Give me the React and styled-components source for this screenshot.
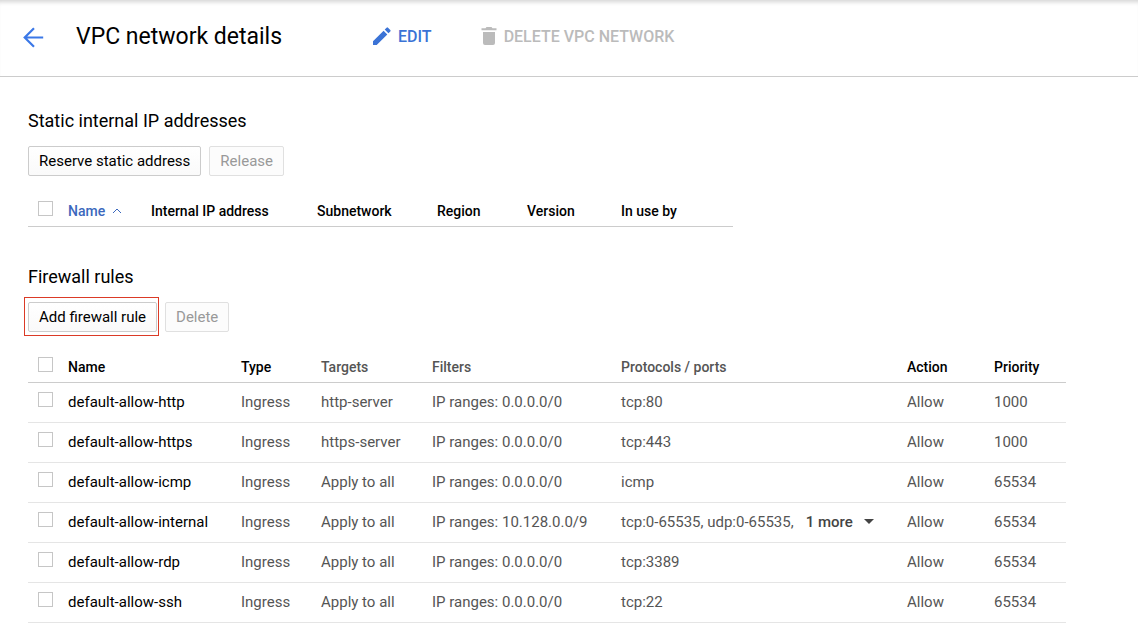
import React from "react";
import styled, { createGlobalStyle } from "styled-components";

const GlobalStyle = createGlobalStyle`
  *, *::before, *::after { box-sizing: border-box; }
  body {
    margin: 0;
    background: #fff;
    color: #000;
    font-family: Roboto, "Liberation Sans", sans-serif;
    font-size: 15px;
    line-height: 20px;
  }
`;

const Header = styled.header`
  display: flex;
  align-items: center;
  height: 77px;
  padding: 0 20px 2px;
  border-bottom: 1px solid #ccc;
  box-shadow: inset 0 5px 4px -3px #d4d4d4;
`;

const BackLink = styled.a`
  display: flex;
  margin-right: 29px;
  color: #3b78e7;
`;

const Title = styled.h1`
  margin: 0 90px 0 0;
  font-size: 23px;
  line-height: 32px;
  font-weight: 400;
  white-space: nowrap;
`;

const ToolbarButton = styled.button`
  display: flex;
  align-items: center;
  gap: 6px;
  margin: 0 48px 0 0;
  padding: 0;
  border: 0;
  background: none;
  color: #3b73d6;
  font: 500 16px/24px Roboto, "Liberation Sans", sans-serif;
  white-space: nowrap;

  &:disabled { color: #bbb; }
`;

const Content = styled.main`
  padding: 32px 72px 12px 28px;
`;

const Section = styled.section`
  & + & { margin-top: 38px; }
`;

const SectionTitle = styled.h2`
  margin: 0 0 13px;
  font-size: 18px;
  line-height: 24px;
  font-weight: 400;
`;

const ButtonRow = styled.div`
  display: flex;
  gap: 8px;
  margin-bottom: 20px;
`;

const Button = styled.button`
  height: 30px;
  padding: 0 10px;
  border: 1px solid #ccc;
  border-radius: 2px;
  background: linear-gradient(#fff, #fafafa);
  color: #000;
  font: 400 15px/20px Roboto, "Liberation Sans", sans-serif;
  white-space: nowrap;

  &:disabled {
    border-color: #e0e0e0;
    background: #fcfcfc;
    color: #999;
  }
`;

const Highlight = styled.div`
  position: relative;
  display: flex;

  &::after {
    content: "";
    position: absolute;
    inset: -5px -2px -4px -4px;
    border: 1px solid #db3a26;
    pointer-events: none;
  }
`;

const Table = styled.table`
  width: ${(p) => (p.$fill ? "100%" : "auto")};
  table-layout: ${(p) => (p.$fill ? "fixed" : "auto")};
  border-collapse: separate;
  border-spacing: 0;
`;

const Col = styled.col`
  width: ${(p) => (p.$w ? `${p.$w}px` : "auto")};
`;

const Checkbox = styled.input.attrs({ type: "checkbox" })`
  display: block;
  appearance: none;
  width: 15px;
  height: 15px;
  margin: 0 0 4px 10px;
  border: 1px solid #c6c6c6;
  background: #fff;
`;

const HeadCell = styled.th`
  height: 31px;
  padding: 0;
  border-bottom: 1px solid #ccc;
  color: ${(p) => (p.$muted ? "#555" : "#000")};
  font-size: 14px;
  font-weight: 500;
  text-align: left;
  white-space: nowrap;

  ${Checkbox} { margin-bottom: 6px; }
`;

const Cell = styled.td`
  height: 40px;
  padding: 0 0 2px;
  border-bottom: 1px solid #e5e5e5;
  color: ${(p) => (p.$strong ? "#000" : "#555")};
  white-space: nowrap;
`;

const SortButton = styled.button`
  display: flex;
  align-items: center;
  gap: 7px;
  padding: 0;
  border: 0;
  background: none;
  color: #3b68bd;
  font: 500 14px/20px Roboto, "Liberation Sans", sans-serif;
`;

const Ports = styled.div`
  display: flex;
  align-items: center;
  gap: 12px;
`;

const MoreButton = styled.button`
  display: flex;
  align-items: center;
  gap: 11px;
  padding: 0;
  border: 0;
  background: none;
  color: #444;
  font: 500 15px/20px Roboto, "Liberation Sans", sans-serif;
`;

const BackIcon = () => (
  <svg width="27" height="27" viewBox="0 0 27 27" fill="none" stroke="currentColor" strokeWidth="2.2" aria-hidden="true">
    <path d="M23.2 13.5H5M14 4.2L4.7 13.5L14 22.8" />
  </svg>
);

const EditIcon = () => (
  <svg width="20" height="20" viewBox="0 0 20 20" fill="currentColor" aria-hidden="true">
    <path d="M1 14.3V18h3.700L15.300 7.400l-3.700-3.700zM18.300 4.400a1 1 0 0 0 0-1.400L16 .7a1 1 0 0 0-1.400 0l-1.900 1.900 3.700 3.700z" />
  </svg>
);

const TrashIcon = () => (
  <svg width="18" height="20" viewBox="0 0 18 20" fill="currentColor" aria-hidden="true">
    <path d="M3 16a2 2 0 0 0 2 2h8a2 2 0 0 0 2-2V5H3zM16.500 1.200h-4L11.500 0h-5l-1 1.200h-4v2h15z" />
  </svg>
);

const SortIcon = () => (
  <svg width="10" height="6" viewBox="0 0 10 6" fill="none" stroke="currentColor" aria-hidden="true">
    <path d="M1 5L5 1L9 5" />
  </svg>
);

const CaretIcon = () => (
  <svg width="10" height="5" viewBox="0 0 10 5" fill="currentColor" aria-hidden="true">
    <path d="M0 0H10L5 5Z" />
  </svg>
);

const addressHeads = ["Internal IP address", "Subnetwork", "Region", "Version", "In use by"];

const ruleHeads = [
  { label: "Name" },
  { label: "Type" },
  { label: "Targets", muted: true },
  { label: "Filters", muted: true },
  { label: "Protocols / ports", muted: true },
  { label: "Action" },
  { label: "Priority" },
];

const rules = [
  { name: "default-allow-http", target: "http-server", range: "0.0.0.0/0", ports: "tcp:80", priority: 1000 },
  { name: "default-allow-https", target: "https-server", range: "0.0.0.0/0", ports: "tcp:443", priority: 1000 },
  { name: "default-allow-icmp", target: "Apply to all", range: "0.0.0.0/0", ports: "icmp", priority: 65534 },
  { name: "default-allow-internal", target: "Apply to all", range: "10.128.0.0/9", ports: "tcp:0-65535, udp:0-65535,", more: "1 more", priority: 65534 },
  { name: "default-allow-rdp", target: "Apply to all", range: "0.0.0.0/0", ports: "tcp:3389", priority: 65534 },
  { name: "default-allow-ssh", target: "Apply to all", range: "0.0.0.0/0", ports: "tcp:22", priority: 65534 },
];

export default function App() {
  return (
    <>
      <GlobalStyle />
      <Header>
        <BackLink href="#networks" aria-label="Back"><BackIcon /></BackLink>
        <Title>VPC network details</Title>
        <ToolbarButton type="button"><EditIcon />EDIT</ToolbarButton>
        <ToolbarButton type="button" disabled><TrashIcon />DELETE VPC NETWORK</ToolbarButton>
      </Header>
      <Content>
        <Section>
          <SectionTitle>Static internal IP addresses</SectionTitle>
          <ButtonRow>
            <Button type="button">Reserve static address</Button>
            <Button type="button" disabled>Release</Button>
          </ButtonRow>
          <Table>
            <colgroup>
              {[40, 83, 166, 120, 90, 94, 112].map((w, i) => <Col key={i} $w={w} />)}
            </colgroup>
            <thead>
              <tr>
                <HeadCell><Checkbox aria-label="Select all addresses" /></HeadCell>
                <HeadCell aria-sort="ascending"><SortButton type="button">Name<SortIcon /></SortButton></HeadCell>
                {addressHeads.map((h) => <HeadCell key={h}>{h}</HeadCell>)}
              </tr>
            </thead>
          </Table>
        </Section>
        <Section>
          <SectionTitle>Firewall rules</SectionTitle>
          <ButtonRow>
            <Highlight><Button type="button">Add firewall rule</Button></Highlight>
            <Button type="button" disabled>Delete</Button>
          </ButtonRow>
          <Table $fill>
            <colgroup>
              {[40, 173, 80, 111, 189, 0, 87, 72].map((w, i) => <Col key={i} $w={w} />)}
            </colgroup>
            <thead>
              <tr>
                <HeadCell><Checkbox aria-label="Select all rules" /></HeadCell>
                {ruleHeads.map((h) => <HeadCell key={h.label} $muted={h.muted}>{h.label}</HeadCell>)}
              </tr>
            </thead>
            <tbody>
              {rules.map((r) => (
                <tr key={r.name}>
                  <Cell><Checkbox aria-label={`Select ${r.name}`} /></Cell>
                  <Cell $strong>{r.name}</Cell>
                  <Cell>Ingress</Cell>
                  <Cell>{r.target}</Cell>
                  <Cell>IP ranges: {r.range}</Cell>
                  <Cell>
                    <Ports>
                      {r.ports}
                      {r.more && <MoreButton type="button">{r.more}<CaretIcon /></MoreButton>}
                    </Ports>
                  </Cell>
                  <Cell>Allow</Cell>
                  <Cell>{r.priority}</Cell>
                </tr>
              ))}
            </tbody>
          </Table>
        </Section>
      </Content>
    </>
  );
}
